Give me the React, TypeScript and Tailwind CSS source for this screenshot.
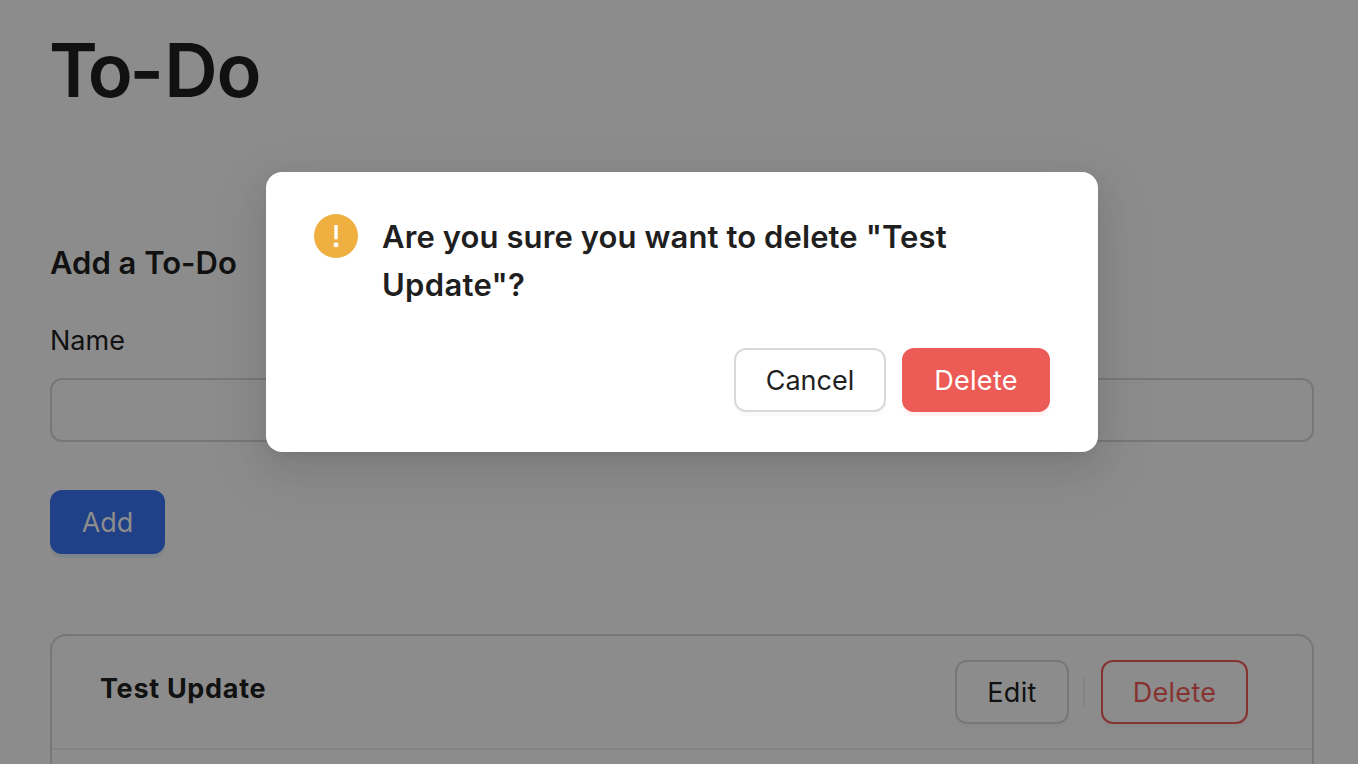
export default function App() {
  return (
    <div className="relative h-[764px] w-[1358px] overflow-hidden bg-[#8c8c8c] font-[Inter,sans-serif] text-[27px] text-[#111111]">
      <main className="flex flex-col items-start pl-[50px] pr-[44px] pt-[24px]">
        <h1 className="-ml-px text-[74px] font-semibold leading-[92px] tracking-[-1.2px]"><span className="tracking-[-10px]">T</span><span className="tracking-[-3.5px]">o</span><span className="tracking-[0.5px]">-</span>Do</h1>
        <h2 className="mt-[123px] text-[31px] font-semibold leading-[48px]">Add a To-Do</h2>
        <label htmlFor="name" className="mt-[32px] leading-[44px]">Name</label>
        <input id="name" className="mt-[15px] h-[64px] w-full rounded-[12px] border-2 border-[#777777] bg-[#8c8c8c]" />
        <button className="mt-[48px] h-[64px] w-[115px] rounded-[12px] bg-[#204088] pt-[2px] text-[#8c8c8c] shadow-[0_4px_0_rgba(5,80,140,0.1)]">Add</button>
        <section className="mt-[80px] h-[220px] w-full rounded-[16px] border-2 border-[#777777]">
          <div className="flex h-[114px] items-center border-b-2 border-[#848484] pl-[48px] pr-[64px]">
            <span className="mr-auto pb-[6px] font-bold tracking-[0.7px]">Test Update</span>
            <button className="h-[64px] w-[114px] rounded-[12px] border-2 border-[#777777] pt-[2px] tracking-[0.3px] shadow-[0_4px_0_rgba(0,0,0,0.02)]">Edit</button>
            <span className="ml-[14px] mr-[16px] h-[28px] w-[2px] bg-[#848484]" />
            <button className="h-[64px] w-[147px] rounded-[12px] border-2 border-[#863330] pt-[2px] tracking-[0.3px] text-[#863330] shadow-[0_4px_0_rgba(0,0,0,0.02)]">Delete</button>
          </div>
        </section>
      </main>
      <div role="dialog" className="absolute left-[266px] top-[172px] flex h-[280px] w-[832px] flex-col rounded-[16px] bg-white px-[48px] pb-[40px] pt-[40px] text-[#1f1f1f] shadow-[0_12px_32px_0_rgba(0,0,0,0.08),0_6px_12px_-8px_rgba(0,0,0,0.12),0_18px_56px_16px_rgba(0,0,0,0.05)]">
        <div className="flex items-start">
          <svg viewBox="0 0 44 44" className="mt-[2px] h-[44px] w-[44px]">
            <circle cx="22" cy="22" r="22" fill="#efaf41" />
            <rect x="20.3" y="11" width="3.4" height="14.3" rx=".5" fill="white" />
            <circle cx="22" cy="30.7" r="2.5" fill="white" />
          </svg>
          <p className="ml-[24px] mt-px w-[620px] text-[31px] font-semibold leading-[48px] tracking-[0.1px]">Are you sure you want to delete "Test<br /><span className="tracking-[0.3px]">Update"?</span></p>
        </div>
        <div className="mt-auto flex justify-end gap-[16px]">
          <button className="h-[64px] w-[152px] rounded-[12px] border-2 border-[#d9d9d9] pt-[2px] shadow-[0_4px_0_rgba(0,0,0,0.02)]">Cancel</button>
          <button className="h-[64px] w-[148px] rounded-[12px] bg-[#ed5b56] pt-[2px] tracking-[0.3px] text-white shadow-[0_4px_0_rgba(255,38,5,0.06)]">Delete</button>
        </div>
      </div>
    </div>
  );
}
